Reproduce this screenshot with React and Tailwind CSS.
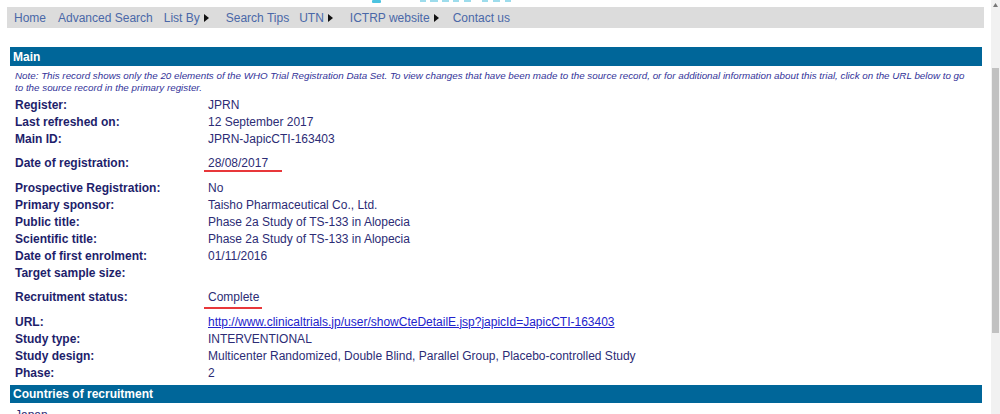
import React from "react";

const Arrow = () => (
  <svg width="5" height="8" viewBox="0 0 5 8" className="ml-[4px] mt-[1px]">
    <path d="M0 0 L5 4 L0 8 Z" fill="#111" />
  </svg>
);

const rows = [
  { l: "Register:", v: "JPRN" },
  { l: "Last refreshed on:", v: "12 September 2017" },
  { l: "Main ID:", v: "JPRN-JapicCTI-163403" },
  { l: "Date of registration:", v: "28/08/2017", tall: true, mark: "w-[78px] top-[16px]" },
  { l: "Prospective Registration:", v: "No" },
  { l: "Primary sponsor:", v: "Taisho Pharmaceutical Co., Ltd." },
  { l: "Public title:", v: "Phase 2a Study of TS-133 in Alopecia" },
  { l: "Scientific title:", v: "Phase 2a Study of TS-133 in Alopecia" },
  { l: "Date of first enrolment:", v: "01/11/2016" },
  { l: "Target sample size:", v: "" },
  { l: "Recruitment status:", v: "Complete", tall: true, mark: "w-[58px] top-[19px]" },
  { l: "URL:", v: "http://www.clinicaltrials.jp/user/showCteDetailE.jsp?japicId=JapicCTI-163403", link: true },
  { l: "Study type:", v: "INTERVENTIONAL" },
  { l: "Study design:", v: "Multicenter Randomized, Double Blind, Parallel Group, Placebo-controlled Study" },
  { l: "Phase:", v: "2" },
];

export default function App() {
  return (
    <div
      className="w-[1000px] h-[414px] overflow-hidden flex items-start bg-white"
      style={{ fontFamily: '"Liberation Sans", Arial, sans-serif' }}
    >
      <div className="w-[991px] shrink-0">
        {/* clipped logo strip (bottom of a logo cut off by the viewport) */}
        <div className="h-[7px] overflow-hidden flex items-start">
          <svg width="160" height="4" viewBox="0 0 160 4" className="ml-[372px]">
            <rect x="0" y="0" width="9" height="3" rx="1" fill="#4cc3e0" />
            <rect x="48" y="0" width="6" height="2" fill="#9ddcec" />
            <rect x="58" y="0" width="8" height="2" fill="#9ddcec" />
            <rect x="70" y="0" width="7" height="2" fill="#9ddcec" />
            <rect x="81" y="0" width="6" height="2" fill="#9ddcec" />
            <rect x="92" y="0" width="7" height="2" fill="#9ddcec" />
            <rect x="110" y="0" width="6" height="2" fill="#9ddcec" />
            <rect x="121" y="0" width="7" height="2" fill="#9ddcec" />
            <rect x="133" y="0" width="6" height="2" fill="#9ddcec" />
          </svg>
        </div>
        {/* nav */}
        <div className="ml-[7px] w-[977px] h-[21px] bg-[#dcdcdc] flex items-center pl-[7px] text-[12px] text-[#4a68a8]">
          <span>Home</span>
          <span className="ml-[12px]">Advanced Search</span>
          <span className="ml-[11px] flex items-center">List By<Arrow /></span>
          <span className="ml-[17px]">Search Tips</span>
          <span className="ml-[10px] flex items-center">UTN<Arrow /></span>
          <span className="ml-[17px] flex items-center">ICTRP website<Arrow /></span>
          <span className="ml-[14px]">Contact us</span>
        </div>
        {/* Main header */}
        <div className="mt-[19px] ml-[10px] w-[972px] h-[19px] bg-[#006699] text-white font-bold text-[12px] pl-[3px] flex items-center">
          Main
        </div>
        <div className="pl-[15px] pr-[16px] mt-[4px] italic text-[9.8px] leading-[12px] text-[#333399]">
          Note: This record shows only the 20 elements of the WHO Trial Registration Data Set. To view changes that have been made to the source record, or for additional information about this trial, click on the URL below to go to the source record in the primary register.
        </div>
        <div className="mt-[2px] pl-[15px] text-[12px] text-[#23236e]">
          {rows.map((r, i) => (
            <div
              key={i}
              className={
                "flex items-center " + (r.tall ? "h-[32px]" : "h-[17px]")
              }
            >
              <div className="w-[193px] shrink-0 font-bold text-[#1e1e6b]">{r.l}</div>
              <div className="relative text-[#2c2c75]">
                {r.link ? (
                  <span className="text-[#2222cc] underline">{r.v}</span>
                ) : (
                  r.v
                )}
                {r.mark && (
                  <div className={"absolute -left-[4px] h-[2px] bg-[#e8373a] " + r.mark} />
                )}
              </div>
            </div>
          ))}
        </div>
        <div className="mt-[4px] ml-[10px] w-[972px] h-[18px] bg-[#006699] text-white font-bold text-[12px] pl-[3px] flex items-center">
          Countries of recruitment
        </div>
        <div className="mt-[4px] pl-[15px] text-[12px] leading-[17px] text-[#2c2c75]">Japan</div>
      </div>
      {/* scrollbar */}
      <div className="w-[9px] h-[414px] bg-[#f1f1f1] flex flex-col items-center shrink-0">
        <svg width="5" height="4" viewBox="0 0 5 4" className="mt-[3px]">
          <path d="M2.5 0 L5 4 L0 4 Z" fill="#777" />
        </svg>
        <div className="mt-[61px] w-[7px] h-[265px] bg-[#c1c1c1]" />
      </div>
    </div>
  );
}
